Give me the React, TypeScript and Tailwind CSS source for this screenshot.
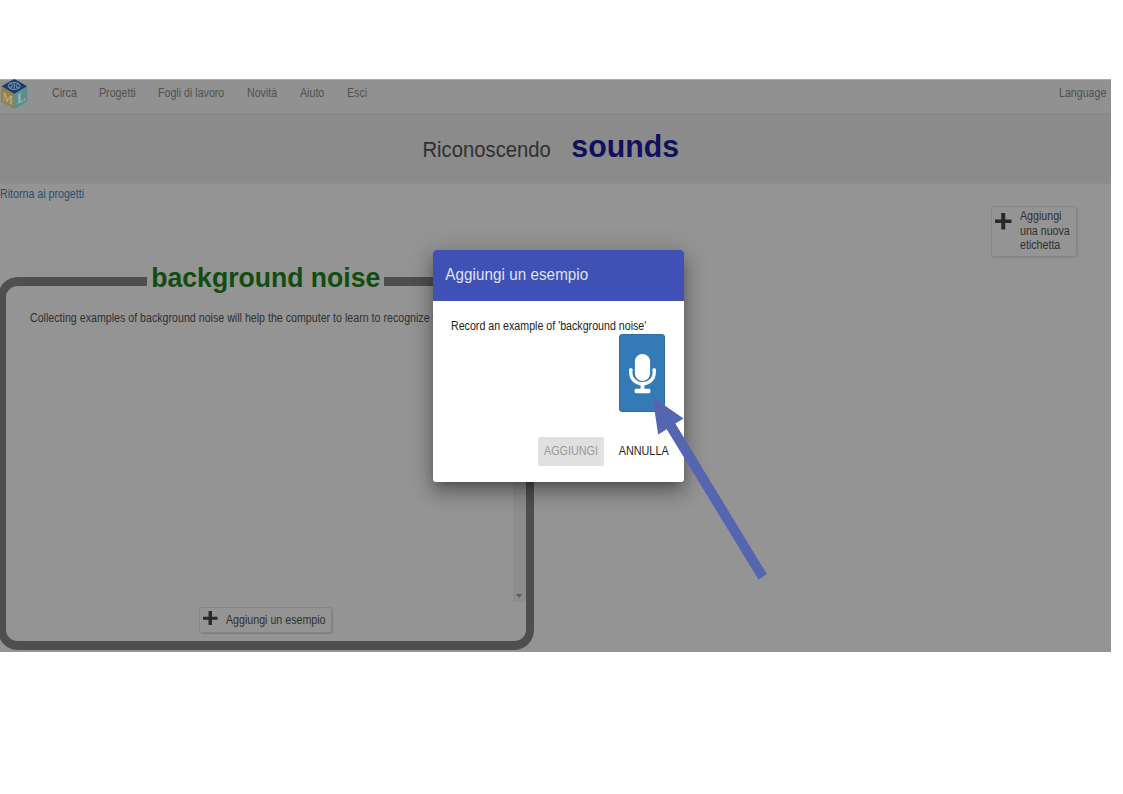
import React from "react";

const navItems = [
  { label: "Circa", width: "w-[47.4px]" },
  { label: "Progetti", width: "w-[59.4px]" },
  { label: "Fogli di lavoro", width: "w-[89px]" },
  { label: "Novità", width: "w-[53px]" },
  { label: "Aiuto", width: "w-[47px]" },
  { label: "Esci", width: "w-[30px]" },
];

function Condensed({ children }: { children: React.ReactNode }) {
  return <span className="block origin-left scale-x-[.8875] whitespace-nowrap">{children}</span>;
}

function Logo() {
  return (
    <svg width="28" height="31" viewBox="0 0 28 31" className="block">
      <polygon points="14.3,0 27.3,7.3 14.3,15 1.3,7.3" fill="#153f74" />
      <polygon points="1.3,7.3 14.3,15 14.3,30 1.3,22.5" fill="#958042" />
      <polygon points="27.3,7.3 14.3,15 14.3,30 27.3,22.5" fill="#5b8f8e" />
      <g fill="none" stroke="#8b9eae" strokeWidth="0.9">
        <ellipse cx="14.2" cy="7" rx="6" ry="3.5" />
        <path d="M14.2 3.5v7M9.5 5.2c2-1 3 .3 3 1.5s-2.5 1-3.5 2M19 5.2c-2-1-3 .3-3 1.5s2.5 1 3.5 2M10.5 9.5l2-1.5M18 9.5l-2-1.5" />
      </g>
      <text transform="matrix(.9 .4 0 1.05 2.4 21.5)" fontFamily="Liberation Serif, serif" fontSize="12.5" fontWeight="bold" fill="#b3ab90">M</text>
      <text transform="matrix(.9 -.4 0 1 17 25)" fontFamily="Liberation Serif, serif" fontSize="14" fontWeight="bold" fill="#a3b5b1">L</text>
    </svg>
  );
}

function Plus({ size }: { size: number }) {
  return (
    <svg width={size} height={size} viewBox="0 0 16 16" className="block shrink-0">
      <path d="M6.1 0h3.8v6.3H16v3.4H9.9V16H6.1V9.7H0V6.3h6.1z" fill="#292929" />
    </svg>
  );
}

function TopBar() {
  return (
    <header className="flex h-[34.5px] shrink-0 items-start justify-between border-t border-t-[#aaa] border-b border-b-[#888] bg-[#919191] pr-[4.5px] text-[#505050]">
      <div className="flex items-start">
        <div className="-mt-px w-[51.5px]">
          <Logo />
        </div>
        <nav className="flex pt-[3px] leading-[21px]">
          {navItems.map((item) => (
            <a key={item.label} className={item.width}>
              <Condensed>{item.label}</Condensed>
            </a>
          ))}
        </nav>
      </div>
      <span className="mt-[3px] block origin-right scale-x-[.8875] leading-[21px]">Language</span>
    </header>
  );
}

function TrainingBucket() {
  return (
    <section className="-ml-[2px] flex h-[373px] w-[536px] flex-col rounded-[20px] border-x-[8px] border-y-[9px] border-[#4f4f4f]">
      <h2 className="-mt-[25px] ml-[141.4px] h-[32px] w-[237px] bg-[#949494] pl-[3.9px] text-[26.6px] leading-[32px] font-bold whitespace-nowrap text-[#114c11]">
        <span className="block scale-y-[1.06]">background noise</span>
      </h2>
      <div className="mt-px flex h-[308px] shrink-0 justify-between">
        <p className="mt-[15.5px] ml-[24px] h-[16px] w-[450px] leading-[16px] text-[#303030]">
          <Condensed>Collecting examples of background noise will help the computer to learn to recognize y</Condensed>
        </p>
        <div className="flex w-[13px] shrink-0 items-end justify-center bg-[#8d8d8d] pb-[4px]">
          <svg width="7" height="4" viewBox="0 0 7 4" className="block">
            <polygon points="0,0 6.5,0 3.2,3.8" fill="#5d5d5d" />
          </svg>
        </div>
      </div>
      <button className="mt-[5px] ml-[193px] flex h-[26px] w-[133px] shrink-0 items-start gap-[8px] rounded-[3px] border border-[#858585] pt-[2.5px] pl-[3px] text-[#303030] shadow-[1px_1px_1px_#7e7e7e]">
        <Plus size={14.5} />
        <span className="w-[100px] text-left leading-[18px]">
          <Condensed>Aggiungi un esempio</Condensed>
        </span>
      </button>
    </section>
  );
}

function Microphone() {
  return (
    <svg width="27" height="40" viewBox="0 0 27 40" className="block">
      <rect x="5.9" y="0" width="15.2" height="27" rx="7.4" fill="#fff" />
      <path d="M1.8 15v3.5c0 7 5.5 11.2 11.7 11.2s11.7-4.2 11.7-11.2V15" fill="none" stroke="#fff" strokeWidth="3.4" />
      <circle cx="1.8" cy="15.6" r="1.6" fill="#fff" />
      <circle cx="25.2" cy="15.6" r="1.6" fill="#fff" />
      <path d="M11.6 30h3.8v4.7h4.7c1 0 1.3.6 1.3 1.7v1.2c0 1.1-.4 1.7-1.4 1.7H7c-1 0-1.4-.6-1.4-1.7v-1.2c0-1.1.3-1.7 1.3-1.7h4.7z" fill="#fff" />
    </svg>
  );
}

function RecordDialog() {
  return (
    <div
      role="dialog"
      className="absolute top-[250.3px] left-[433px] flex h-[232.2px] w-[250.5px] flex-col rounded-[3px] bg-white text-[#222] shadow-[0_5px_11px_-5px_rgba(0,0,0,0.4),0_12px_18px_1px_rgba(0,0,0,0.18),0_4px_23px_4px_rgba(0,0,0,0.16)]"
    >
      <div className="h-[50.5px] shrink-0 rounded-t-[3px] bg-[#3f51b5] pl-[12.3px] text-[15.2px] leading-[50px] tracking-[0.06px] text-[#dfe2f4]">
        <span className="block scale-y-[1.08]">Aggiungi un esempio</span>
      </div>
      <div className="flex grow flex-col px-[18.3px] pt-[16.9px]">
        <p className="h-[16px] leading-[16px]">
          <Condensed>Record an example of 'background noise'</Condensed>
        </p>
        <button className="mt-[.3px] flex h-[78px] w-[46px] shrink-0 justify-center self-end rounded-[3px] border border-[#2e6da4] bg-[#337ab7] pt-[18.7px] pl-px">
          <Microphone />
        </button>
        <div className="mt-[25px] -mr-[11px] flex h-[29px] shrink-0 justify-end gap-[7.5px]">
          <button className="flex w-[66px] items-center justify-center rounded-[2px] bg-[#e0e0e0] text-[#9a9a9a]">
            <span className="block scale-x-[.9]">AGGIUNGI</span>
          </button>
          <button className="flex w-[65px] items-center justify-center">
            <span className="block scale-x-[.9]">ANNULLA</span>
          </button>
        </div>
      </div>
    </div>
  );
}

function Pointer() {
  return (
    <svg width="120" height="190" viewBox="650 394 120 190" className="pointer-events-none absolute top-[394px] left-[650px]">
      <polygon points="652.5,397 683.5,418.5 675.3,423.6 766.8,574 758.5,579.6 666.7,429.2 658.2,434.6" fill="#5566b1" />
    </svg>
  );
}

export default function App() {
  return (
    <main className="relative h-[794px] w-[1123px] overflow-hidden bg-white pt-[79px] font-['Liberation_Sans',Arial,sans-serif] text-xs">
      <div className="flex h-[573px] w-[1111px] flex-col overflow-hidden bg-[#949494]">
        <TopBar />
        <div className="flex h-[70px] shrink-0 items-baseline gap-[20.5px] border-b border-[#8f8f8f] bg-[#8b8b8b] pt-[14.8px] pl-[422.5px]">
          <span className="inline-block scale-y-[1.07] text-[20.25px] text-[#303030]">Riconoscendo</span>
          <strong className="inline-block scale-y-[1.04] text-[30.3px] leading-[38px] text-[#10105c]">sounds</strong>
        </div>
        <a className="mt-[2px] -ml-[.5px] block h-[16px] shrink-0 leading-[16px] text-[#254e73]">
          <Condensed>Ritorna ai progetti</Condensed>
        </a>
        <div className="mt-px flex shrink-0 items-start justify-between pr-[34.5px]">
          <div className="pt-[74.5px]">
            <TrainingBucket />
          </div>
          <button className="mt-[3.5px] flex h-[50.5px] w-[85.5px] items-start gap-[8.5px] rounded-[3px] border border-[#858585] pt-[2px] pl-[3px] text-left text-[#303030] shadow-[1px_1px_1px_#858585]">
            <span className="mt-[4px]">
              <Plus size={16.5} />
            </span>
            <span className="w-[50px] leading-[14.65px]">
              <Condensed>
                Aggiungi
                <br />
                una nuova
                <br />
                etichetta
              </Condensed>
            </span>
          </button>
        </div>
      </div>
      <RecordDialog />
      <Pointer />
    </main>
  );
}
